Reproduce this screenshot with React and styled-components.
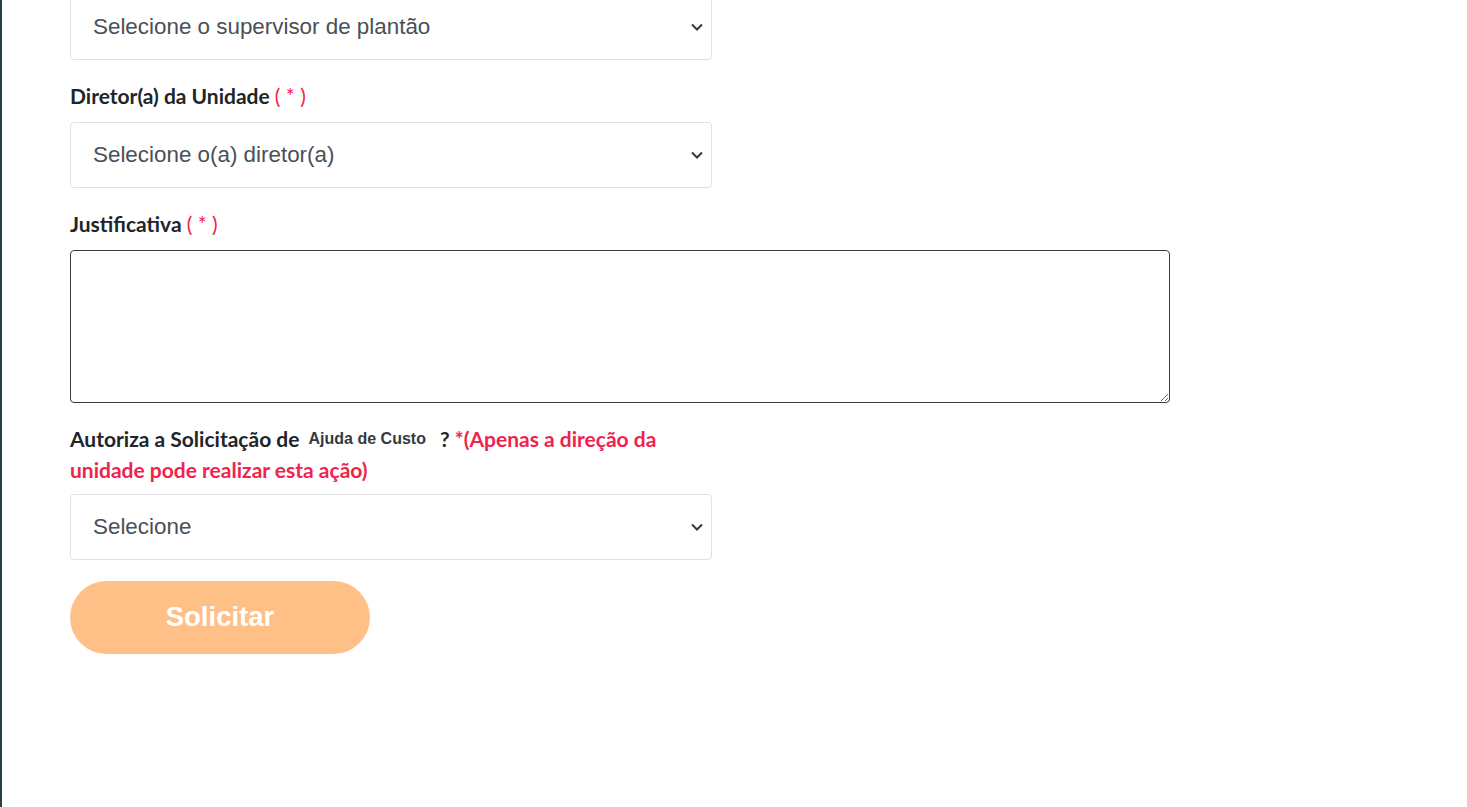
import React from "react";
import styled, { createGlobalStyle } from "styled-components";

const GlobalStyle = createGlobalStyle`
  html, body {
    margin: 0;
    padding: 0;
    background: #fff;
    overflow: hidden;
  }
  body {
    font-family: "Lato", "Liberation Sans", sans-serif;
  }
`;

function Chevron() {
  return (
    <svg width="14" height="10" viewBox="0 0 14 10">
      <path d="M2 2.5 L7 7.5 L12 2.5" fill="none" stroke="#343a40" strokeWidth="2" />
    </svg>
  );
}

function Select({ children, first }) {
  return (
    <SelectBox first={first}>
      <SelectText>{children}</SelectText>
      <Chevron />
    </SelectBox>
  );
}

function App() {
  return (
    <>
      <GlobalStyle />
      <Page>
        <Form>
          <Select first>Selecione o supervisor de plantão</Select>

          <Label>
            Diretor(a) da Unidade <Req>( * )</Req>
          </Label>
          <Select>Selecione o(a) diretor(a)</Select>

          <Label>
            Justificativa <Req>( * )</Req>
          </Label>
          <TextArea />

          <Label wide>
            Autoriza a Solicitação de <Small>Ajuda de Custo</Small> ?{" "}
            <Warn>*(Apenas a direção da unidade pode realizar esta ação)</Warn>
          </Label>
          <Select>Selecione</Select>

          <Button>Solicitar</Button>
        </Form>
      </Page>
    </>
  );
}

export default App;

const Page = styled.div`
  height: 807px;
  border-left: 2px solid #2d3d48;
  box-sizing: border-box;
  padding-left: 68px;
`;

const Form = styled.div`
  display: flex;
  flex-direction: column;
  align-items: flex-start;
  width: 1100px;
`;

const SelectBox = styled.div`
  width: 642px;
  height: 66px;
  box-sizing: border-box;
  border: 1px solid #dee2e6;
  border-radius: 4px;
  display: flex;
  align-items: center;
  justify-content: space-between;
  padding: 0 7px 0 22px;
  margin-top: ${({ first }) => (first ? "-6px" : "0")};
`;

const SelectText = styled.span`
  font-family: "Liberation Sans", Arial, sans-serif;
  font-size: 22.4px;
  color: #495057;
`;

const Label = styled.div`
  font-size: 21px;
  font-weight: 700;
  color: #212529;
  line-height: ${({ wide }) => (wide ? "31px" : "27px")};
  margin: ${({ wide }) => (wide ? "20px 0 9px" : "22px 0 13px")};
  max-width: ${({ wide }) => (wide ? "642px" : "none")};
`;

const Req = styled.span`
  color: #f0234d;
  font-weight: 400;
`;

const Warn = styled.span`
  color: #f0234d;
`;

const Small = styled.span`
  font-family: "Liberation Sans", Arial, sans-serif;
  font-size: 16px;
  font-weight: 700;
  line-height: 1;
  color: #343a40;
  margin: 0 9px 0 4px;
  vertical-align: 3px;
`;

const TextArea = styled.textarea`
  width: 1100px;
  height: 153px;
  box-sizing: border-box;
  border: 1px solid #343a40;
  border-radius: 4px;
  margin: 0;
  resize: both;
`;

const Button = styled.button`
  margin-top: 21px;
  width: 300px;
  height: 73px;
  border: none;
  border-radius: 37px;
  background: #ffc088;
  color: #fff;
  font-family: "Liberation Sans", Arial, sans-serif;
  font-size: 27.5px;
  font-weight: 700;
  padding: 0 0 2px;
  cursor: pointer;
`;
